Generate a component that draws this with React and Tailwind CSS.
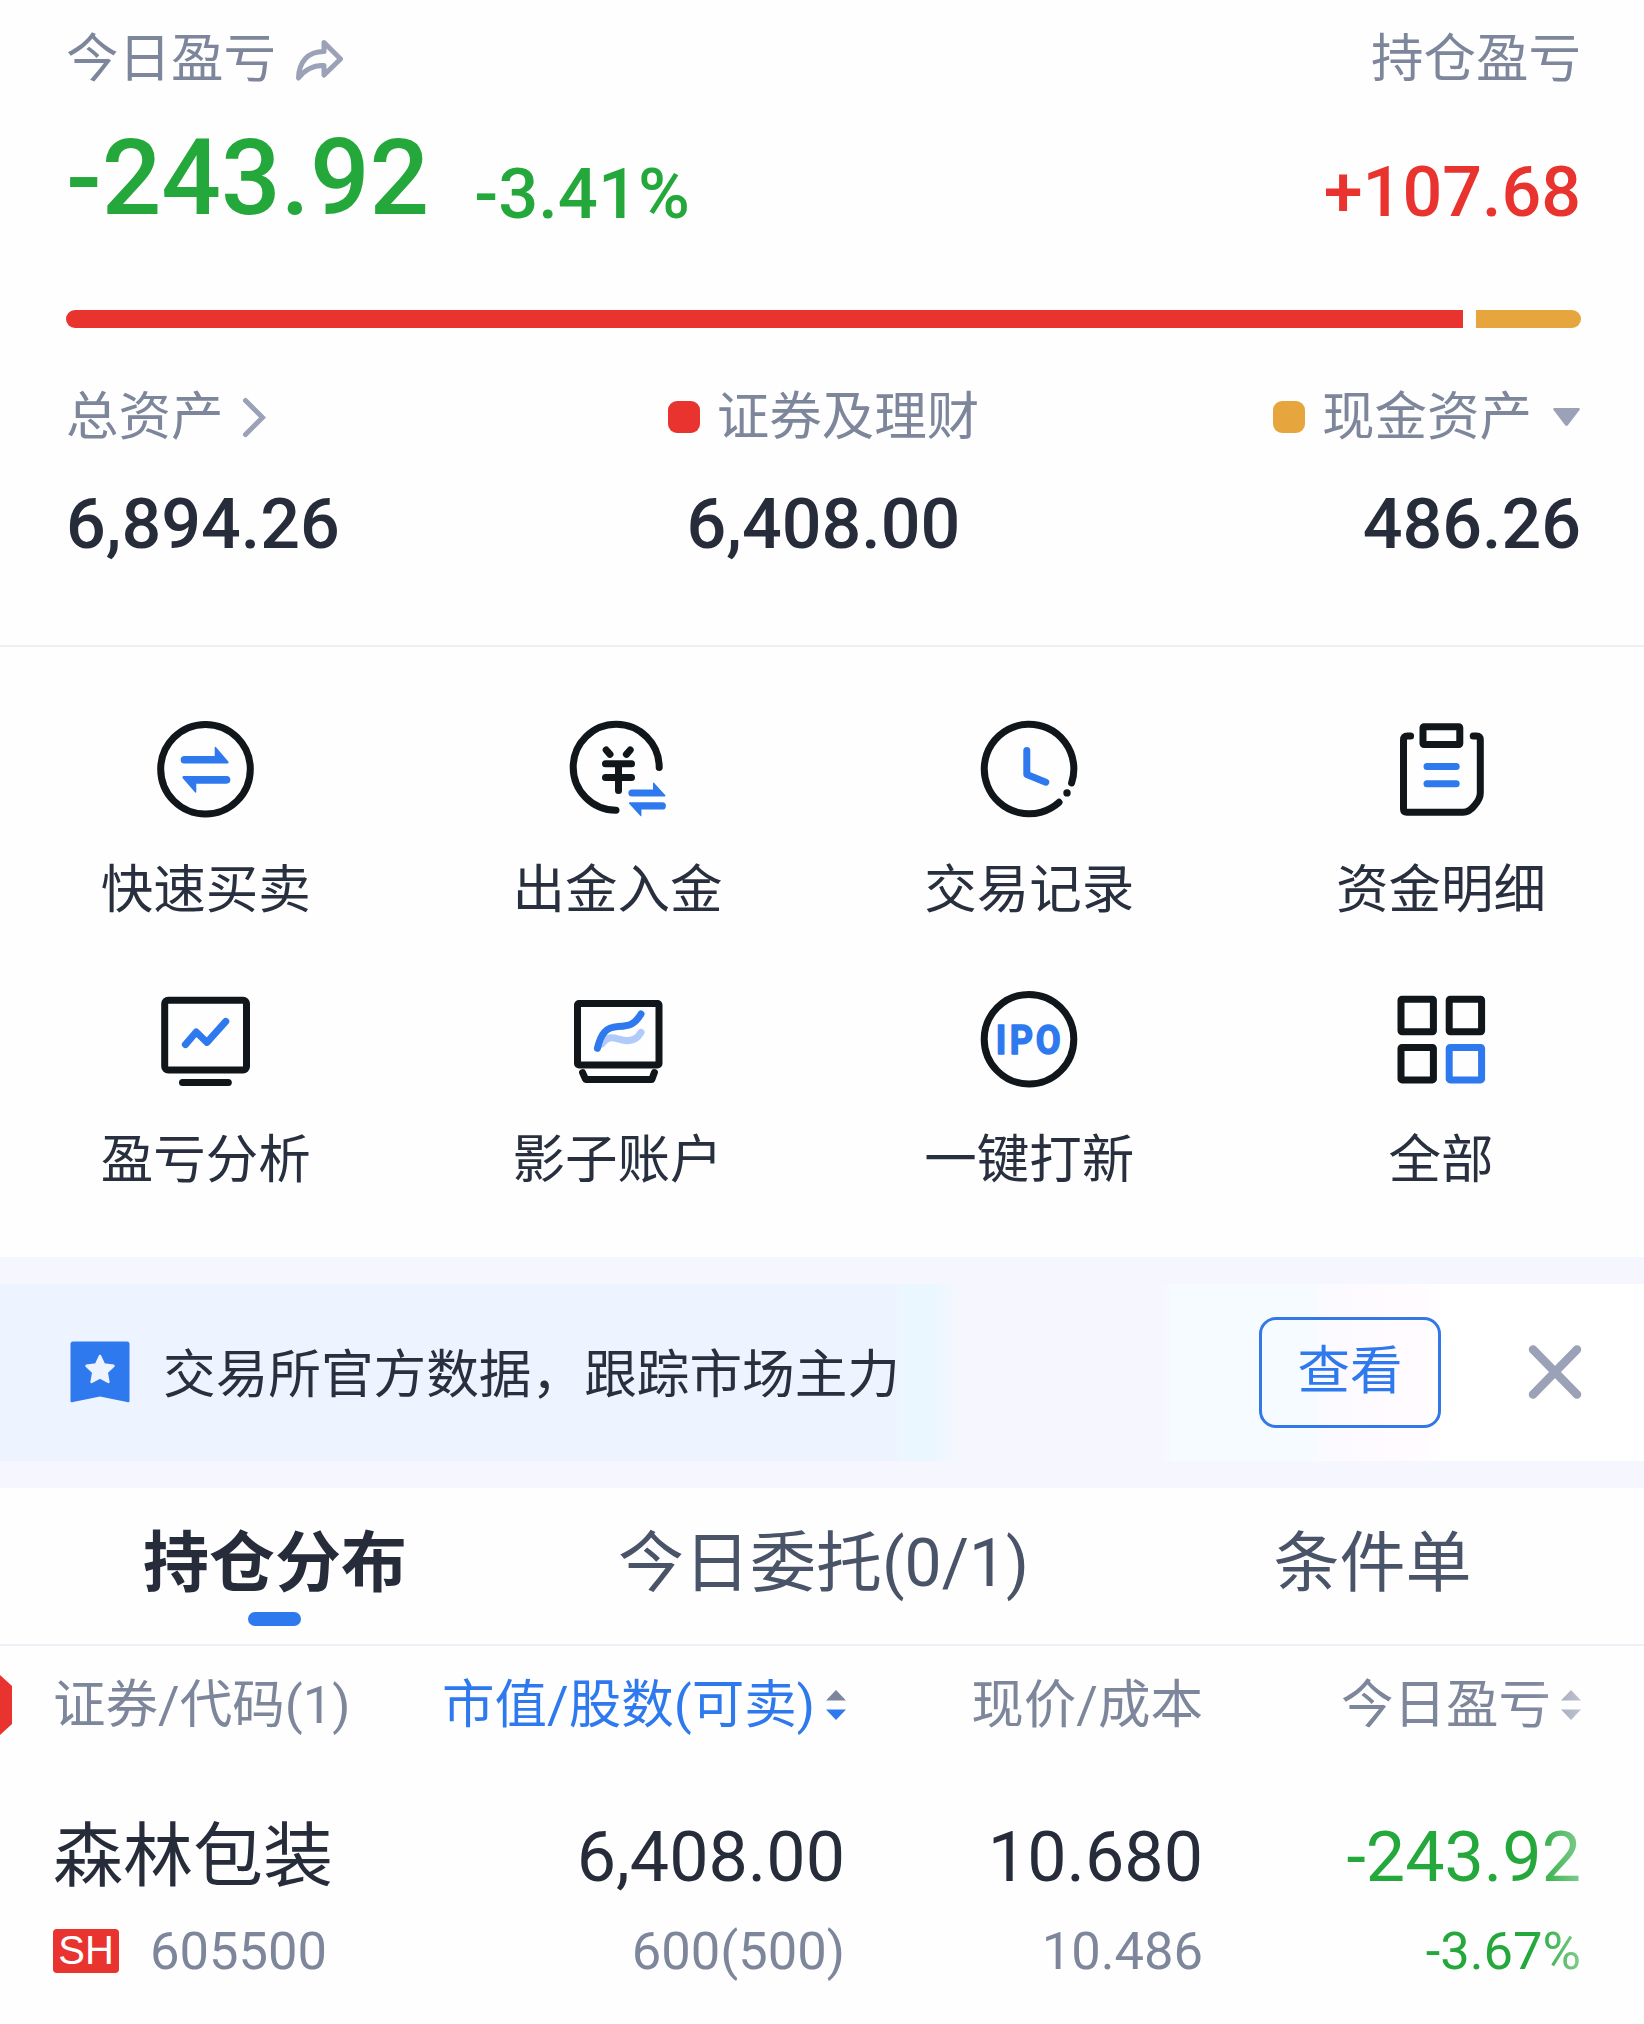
const INK = "#10161a";
const BLUE = "#2f79ee";

function Icon({ children }) {
  return (
    <svg viewBox="0 0 104 104" className="block h-[104px] w-[104px]" fill="none" stroke={INK} strokeWidth="7" strokeLinecap="round" strokeLinejoin="round">
      {children}
    </svg>
  );
}

const icons = {
  trade: (
    <Icon>
      <circle cx="51.500" cy="52.200" r="44.800" />
      <g fill={BLUE} stroke="none">
        <path d="M30.500 38.900H60.700V30.500Q61.100 29.100 62.300 30.500L74.500 44.700Q74.900 46.600 73.500 46.600H30.500A3.850 3.850 0 0 1 30.500 38.900Z" />
        <path transform="rotate(180 51.500 52.800)" d="M30.500 38.900H60.700V30.500Q61.100 29.100 62.300 30.500L74.500 44.700Q74.900 46.600 73.500 46.600H30.500A3.850 3.850 0 0 1 30.500 38.900Z" />
      </g>
    </Icon>
  ),
  cash: (
    <Icon>
      <path d="M93.200 50.500A43 43 0 1 0 50 93.300" />
      <path d="M40.200 33L44 37.400M64.200 33L60.400 37.400" />
      <path d="M39.500 46.800H65.500M39.500 60.400H65.500M52.500 48V73.500" />
      <g fill={BLUE} stroke="none">
        <path d="M66 72.400H87V66Q87.400 65 88.200 66L99.400 78.200Q99.600 79.600 98.600 79.600H66A3.500 3.500 0 0 1 66 72.400Z" />
        <path d="M96.300 85.300A3.500 3.500 0 0 1 96.300 92.500H75.400V98.800Q75 99.800 74.200 98.800L63 86.400Q62.800 85.300 63.800 85.300Z" />
      </g>
    </Icon>
  ),
  history: (
    <Icon>
      <path d="M94.600 66A44.800 44.800 0 1 0 82 85.300" />
      <circle cx="90" cy="75.900" r="3.700" fill={INK} stroke="none" />
      <path d="M49.800 33.500V57.500L68.800 65.200" stroke={BLUE} />
    </Icon>
  ),
  detail: (
    <Icon>
      <path d="M21.600 19H18.500Q14.500 19 14.500 23V92Q14.500 95.300 18 95.300H74Q80 95.300 85.500 88.500Q91.300 82 91.300 76V23Q91.300 19 87.500 19H84.200" />
      <rect x="34" y="9.800" width="36.800" height="17.800" rx="1" />
      <path d="M38 49.600H67.200M38 66.800H67.200" stroke={BLUE} />
    </Icon>
  ),
  analysis: (
    <Icon>
      <rect x="10.700" y="13.200" width="81.800" height="69.800" rx="3.500" />
      <path d="M28.500 95.600H74.300" />
      <path d="M31.400 57.600L42.200 45L53 55.400L71.800 34.400" stroke={BLUE} />
    </Icon>
  ),
  shadow: (
    <Icon>
      <rect x="11.500" y="16.500" width="81.500" height="61.400" rx="1.500" />
      <path d="M16.600 85.600L19.600 92.400H85.800L88.400 85.600" />
      <path d="M36 57C41 49 46 50.400 53 52.200C62 55 70 54 75 45.400" stroke="#b0cbf9" />
      <path d="M31.400 61.400C35 46 40 40.400 52 39.600C64 39 69 37 75 27" stroke={BLUE} />
    </Icon>
  ),
  ipo: (
    <Icon>
      <circle cx="52" cy="52.200" r="44.800" />
      <text transform="scale(0.88 1)" x="21.200 37.100 66.900" y="67" fontFamily="Roboto, sans-serif" fontWeight="700" fontSize="41" fill={BLUE} stroke={BLUE} strokeWidth="1.600">IPO</text>
    </Icon>
  ),
  all: (
    <Icon>
      <rect x="12" y="12.300" width="32.400" height="32.400" rx="1" />
      <rect x="60.200" y="12.300" width="32.400" height="32.400" rx="1" />
      <rect x="12" y="60.500" width="32.400" height="32.400" rx="1" />
      <rect x="60.200" y="60.500" width="32.400" height="32.400" rx="1" stroke={BLUE} />
    </Icon>
  ),
};

const actions = [
  ["trade", "快速买卖"],
  ["cash", "出金入金"],
  ["history", "交易记录"],
  ["detail", "资金明细"],
  ["analysis", "盈亏分析"],
  ["shadow", "影子账户"],
  ["ipo", "一键打新"],
  ["all", "全部"],
];

function Sort({ up, down }) {
  return (
    <svg viewBox="0 0 20 30" className="h-[30px] w-5 shrink-0">
      <path d="M10 0L20 10.400H0Z" fill={up} />
      <path d="M10 30L20 19.600H0Z" fill={down} />
    </svg>
  );
}

function Summary() {
  return (
    <section className="h-[647px] border-b-2 border-[#eff0f5] pl-[66px] pr-[63px] pt-[29px]">
      <div className="flex h-[60px] items-center justify-between text-[52.5px] leading-[60px] text-[#7d869b]">
        <div className="flex items-center">
          <span>今日盈亏</span>
          <svg viewBox="0 0 50 46" className="ml-[17px] h-[46px] w-[50px]" fill="none" stroke="#9ba1b6" strokeWidth="5" strokeLinejoin="round">
            <path d="M31 6.500L47.500 23L31 39V29.500C20.500 29 12.500 33 5.500 42C6 26 14.500 15.500 31 15.500Z" />
          </svg>
        </div>
        <span>持仓盈亏</span>
      </div>
      <div className="flex h-[130px] items-start justify-between pt-[30px] font-medium">
        <div className="flex text-[#25a83b]">
          <span className="text-[105px] leading-[120px]">-243.92</span>
          <span className="ml-[45px] pt-[15px] text-[70.5px] leading-[120px]">-3.41%</span>
        </div>
        <span className="pt-[13px] text-[70px] leading-[120px] text-[#e8332f]">+107.68</span>
      </div>
      <div className="mt-[91px] flex h-[18px] gap-[13px]">
        <div className="w-[1397px] rounded-l-full bg-[#e8332f]" />
        <div className="grow rounded-r-full bg-[#e6a63d]" />
      </div>
      <div className="mt-[59px] grid grid-cols-3">
        <div>
          <div className="flex h-[60px] items-center text-[52.5px] leading-[60px] text-[#7d869b]">
            总资产
            <svg viewBox="0 0 24 42" className="ml-[18px] h-[42px] w-6" fill="none" stroke="#9ba1b6" strokeWidth="5" strokeLinecap="round">
              <path d="M3.500 4.500L20.500 21.500L3.500 38.500" />
            </svg>
          </div>
          <div className="mt-[37px] text-[70px] font-medium leading-[80px] text-[#272c3b]">6,894.26</div>
        </div>
        <div className="flex flex-col items-center">
          <div className="flex h-[60px] items-center gap-[17px] text-[52.5px] leading-[60px] text-[#7d869b]">
            <span className="h-8 w-8 rounded-[9px] bg-[#e8332f]" />
            证券及理财
          </div>
          <div className="mt-[37px] text-[70px] font-medium leading-[80px] text-[#272c3b]">6,408.00</div>
        </div>
        <div className="flex flex-col items-end">
          <div className="flex h-[60px] items-center text-[52.5px] leading-[60px] text-[#7d869b]">
            <span className="mr-[17px] h-8 w-8 rounded-[9px] bg-[#e6a63d]" />
            现金资产
            <svg viewBox="0 0 28 20" className="ml-[20px] h-5 w-[29px]" fill="#9ba1b6">
              <path d="M2 1H26Q28 1 27 3L15.500 18Q14 20 12.500 18L1 3Q0 1 2 1Z" />
            </svg>
          </div>
          <div className="mt-[37px] text-[70px] font-medium leading-[80px] text-[#272c3b]">486.26</div>
        </div>
      </div>
    </section>
  );
}

function Actions() {
  return (
    <section className="h-[610px] pt-[70px]">
      <div className="grid w-[1647px] grid-cols-4">
        {actions.map(([icon, label]) => (
          <div key={icon} className="flex h-[270px] flex-col items-center">
            {icons[icon]}
            <span className="mt-[39px] text-[52.5px] leading-[60px] text-[#282f3e]">{label}</span>
          </div>
        ))}
      </div>
    </section>
  );
}

function Banner() {
  return (
    <section className="h-[231px] bg-[#f6f7fe] py-[27px]">
      <div className="flex h-[177px] items-center bg-[linear-gradient(90deg,#edf3ff_0,#edf3ff_887px,#ebf7ff_905px,#ebf7ff_935px,#f6f7fe_960px,#f6f7fe_1160px,#f5fbff_1172px,#f5fbff_1305px,#fdfaff_1340px,#fffbff_1420px,#ffffff_1444px)] pl-[70px] pr-[61px]">
        <svg viewBox="0 0 60 62" className="mb-[2px] h-[62px] w-[60px]">
          <path d="M3 0.500H57Q59.500 0.500 59.500 3V60Q59.500 62 57 61L30 55.500L3 61Q0.500 62 0.500 60V3Q0.500 0.500 3 0.500Z" fill={BLUE} />
          <path d="M30 15L34 23.500L43.500 24.800L36.700 31.400L38.400 41L30 36.400L21.600 41L23.300 31.400L16.500 24.800L26 23.500Z" fill="#edf3ff" stroke="#edf3ff" strokeWidth="2.500" strokeLinejoin="round" />
        </svg>
        <span className="ml-[33px] pt-[5px] text-[52.65px] leading-[60px] text-[#282f3e]">交易所官方数据，跟踪市场主力</span>
        <button className="ml-auto mr-px h-[111px] w-[182px] rounded-[17px] border-[3px] border-[#3478e8] pb-[4px] text-[52.5px] leading-[60px] text-[#2f79ee]">查看</button>
        <svg viewBox="0 0 56 56" className="mb-[2px] ml-[85px] h-14 w-14" stroke="#9ba1b6" strokeWidth="8.500" strokeLinecap="round">
          <path d="M6 5.500L50 50.500M50 5.500L6 50.500" />
        </svg>
      </div>
    </section>
  );
}

function Tabs() {
  return (
    <nav className="grid h-[158px] grid-cols-3 border-b-2 border-[#eff0f5] pt-[36px] text-center text-[66px] leading-[80px] text-[#4a5468]">
      <div className="flex flex-col items-center font-bold text-[#272c3b]">
        <span className="pl-[2px]">持仓分布</span>
        <span className="mt-[8px] h-[14px] w-[53px] rounded-full bg-[#2f79ee]" />
      </div>
      <div className="pl-[3px]">今日委托(0/1)</div>
      <div className="pl-[5px]">条件单</div>
    </nav>
  );
}

function Holdings() {
  return (
    <section className="relative h-[378px] pt-[29px]">
      <div className="grid h-[60px] grid-cols-[53px_347px_446px_357px_378px] text-[52.5px] leading-[60px] text-[#7d869b]">
        <svg viewBox="0 0 12 60" className="h-[60px] w-3" fill="#e8332f">
          <path d="M0 0L12 11V49L0 60Z" />
        </svg>
        <div>证券/代码(1)</div>
        <div className="flex items-center justify-end gap-[11px] text-[#2f79ee]">
          市值/股数(可卖)
          <Sort up="#7d869b" down="#2f79ee" />
        </div>
        <div className="text-right">现价/成本</div>
        <div className="flex items-center justify-end gap-[10px]">
          今日盈亏
          <Sort up="#9096ac" down="#9096ac" />
        </div>
      </div>
      <div className="mt-[82px] grid h-[80px] grid-cols-[53px_347px_445px_358px_378px] text-right text-[70px] leading-[80px] text-[#272c3b]">
        <div className="col-start-2 text-left">森林包装</div>
        <div>6,408.00</div>
        <div>10.680</div>
        <div className="text-[#25a83b]">-243.92</div>
      </div>
      <div className="mt-[24px] grid h-[60px] grid-cols-[53px_347px_445px_358px_378px] text-right text-[52.5px] leading-[60px] text-[#7d869b]">
        <div className="col-start-2 flex items-center">
          <span className="mr-[31px] h-[44px] w-[66px] rounded-[4px] bg-[#e8332f] text-center font-['Liberation_Sans',sans-serif] text-[40px] leading-[43px] text-white">SH</span>
          605500
        </div>
        <div>600(500)</div>
        <div>10.486</div>
        <div className="text-[#25a83b]">-3.67%</div>
      </div>
      <div className="pointer-events-none absolute inset-y-0 right-0 w-[110px] bg-linear-to-r from-[#fefefe]/0 to-[#fefefe]" />
    </section>
  );
}

export default function App() {
  return (
    <main className="h-[2024px] w-[1644px] overflow-hidden bg-[#fefefe] font-['Roboto','Noto_Sans_CJK_SC',sans-serif]">
      <Summary />
      <Actions />
      <Banner />
      <Tabs />
      <Holdings />
    </main>
  );
}
